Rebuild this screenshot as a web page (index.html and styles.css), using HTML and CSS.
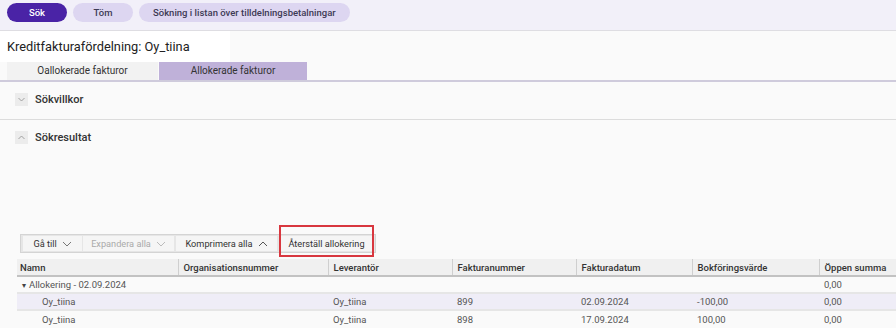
FILE: index.html
```html
<!DOCTYPE html>
<html lang="sv">
<head>
<meta charset="utf-8">
<title>Kreditfakturafördelning</title>
<link rel="stylesheet" href="styles.css">
</head>
<body>
<div class="topbar">
  <button class="pill pill-primary">Sök</button>
  <button class="pill pill-light w60">Töm</button>
  <button class="pill pill-light">Sökning i listan över tilldelningsbetalningar</button>
</div>
<div class="title">Kreditfakturafördelning: Oy_tiina</div>
<div class="tabs">
  <div class="tab">Oallokerade fakturor</div>
  <div class="tab tab-active">Allokerade fakturor</div>
</div>
<div class="section section-first">
  <span class="chev"><svg width="7" height="5" viewBox="0 0 7 5"><path d="M0.5 1 L3.5 4 L6.5 1" fill="none" stroke="#999" stroke-width="0.9"/></svg></span>
  <span class="section-title">Sökvillkor</span>
</div>
<div class="section">
  <span class="chev"><svg width="7" height="5" viewBox="0 0 7 5"><path d="M0.5 4 L3.5 1 L6.5 4" fill="none" stroke="#999" stroke-width="0.9"/></svg></span>
  <span class="section-title">Sökresultat</span>
</div>
<div class="results">
  <div class="toolbar">
    <button class="tb-btn w-goto">Gå till <svg width="10" height="6" viewBox="0 0 10 6"><path d="M1 1 L5 5 L9 1" fill="none" stroke="#777" stroke-width="1"/></svg></button>
    <button class="tb-btn tb-disabled w-exp">Expandera alla <svg width="10" height="6" viewBox="0 0 10 6"><path d="M1 1 L5 5 L9 1" fill="none" stroke="#bbb" stroke-width="1"/></svg></button>
    <button class="tb-btn w-comp">Komprimera alla <svg width="10" height="6" viewBox="0 0 10 6"><path d="M1 5 L5 1 L9 5" fill="none" stroke="#555" stroke-width="1"/></svg></button>
    <button class="tb-btn tb-marked w-reset">Återställ allokering</button>
  </div>
  <table class="grid">
    <colgroup>
      <col class="c1"><col class="c2"><col class="c3"><col class="c4"><col class="c5"><col class="c6"><col>
    </colgroup>
    <thead>
      <tr>
        <th>Namn</th><th>Organisationsnummer</th><th>Leverantör</th><th>Fakturanummer</th><th>Fakturadatum</th><th>Bokföringsvärde</th><th>Öppen summa</th>
      </tr>
    </thead>
    <tbody>
      <tr class="group">
        <td><span class="tri">&#9662;</span>Allokering - 02.09.2024</td><td></td><td></td><td></td><td></td><td></td><td>0,00</td>
      </tr>
      <tr class="sel">
        <td class="indent">Oy_tiina</td><td></td><td>Oy_tiina</td><td>899</td><td>02.09.2024</td><td>-100,00</td><td>0,00</td>
      </tr>
      <tr>
        <td class="indent">Oy_tiina</td><td></td><td>Oy_tiina</td><td>898</td><td>17.09.2024</td><td>100,00</td><td>0,00</td>
      </tr>
    </tbody>
  </table>
</div>
</body>
</html>
```
FILE: styles.css
```css
* { box-sizing: border-box; }
html, body { margin: 0; padding: 0; }
body {
  background: #fafafa;
  font-family: "Roboto", "Liberation Sans", sans-serif;
  color: #333;
  width: 896px;
  height: 328px;
  overflow: hidden;
}
button { font-family: inherit; cursor: pointer; }

.topbar {
  height: 31px;
  background: #f2f0f9;
  border-bottom: 1px solid #dedde2;
  display: flex;
  align-items: flex-start;
  gap: 6px;
  padding: 3px 7px 0;
}
.pill {
  height: 19px;
  border: none;
  border-radius: 10px;
  font-size: 9.5px;
  font-weight: 500;
  padding: 0 14px;
}
.pill-primary { background: #4a23a6; color: #fff; width: 60px; }
.pill-light { background: #ddd6f1; color: #3d3a55; }
.w60 { width: 60px; }

.title {
  background: #fff;
  width: 230px;
  height: 31px;
  font-size: 12.8px;
  padding: 8px 0 0 7px;
  color: #222;
}
.tabs {
  display: flex;
  padding-left: 7px;
  border-bottom: 2px solid #cfcbdc;
  height: 20px;
}
.tab {
  width: 151px;
  height: 18px;
  font-size: 10px;
  line-height: 18px;
  text-align: center;
  background: #f2f2f2;
  color: #333;
}
.tab-active { background: #bfb1d9; width: 148px; margin-left: 1px; }

.section {
  display: flex;
  gap: 7px;
  padding: 11px 0 0 15px;
  height: 38px;
  align-items: flex-start;
}
.section-first { border-bottom: 1px solid #dcdcdc; }
.chev {
  width: 13px;
  height: 13px;
  background: #ececec;
  display: flex;
  align-items: center;
  justify-content: center;
}
.section-title {
  font-size: 11px;
  font-weight: 500;
  color: #333;
  line-height: 13px;
}

.results {
  padding: 76px 0 0 17px;
}
.toolbar {
  display: flex;
  width: fit-content;
  margin-left: 3px;
  height: 19px;
  background: #e6e6e6;
  border: 1px solid #d4d4d4;
  padding: 1px 2px;
  gap: 1px;
}
.tb-btn {
  height: 15px;
  border: none;
  background: #f5f5f5;
  font-size: 9.2px;
  color: #333;
  padding: 0;
  display: flex;
  align-items: center;
  justify-content: center;
  gap: 5px;
}
.w-goto { width: 59px; }
.w-exp { width: 91px; }
.w-comp { width: 101px; margin-left: 1px; }
.w-reset { width: 93px; margin-left: 2px; }
.tb-disabled { color: #aaa; }
.tb-marked { position: relative; }
.tb-marked::after {
  content: "";
  position: absolute;
  left: -1px;
  right: -1px;
  top: -11px;
  bottom: -6px;
  border: 2px solid #d8373f;
}

.grid {
  margin-top: 6px;
  width: 879px;
  border-collapse: collapse;
  table-layout: fixed;
  font-size: 9.5px;
}
.c1 { width: 161px; }
.c2 { width: 150px; }
.c3 { width: 124px; }
.c4 { width: 124px; }
.c5 { width: 116px; }
.c6 { width: 127px; }
.grid th {
  background: #f0f0f0;
  height: 17px;
  font-weight: 500;
  text-align: left;
  padding: 0 5px;
  border-left: 1px solid #cfcfcf;
  border-bottom: 2px solid #c2c2c2;
  color: #333;
  white-space: nowrap;
}
.grid th:first-child { border-left: none; padding-left: 3px; }
.grid td {
  height: 17px;
  padding: 0 5px;
  color: #555;
  white-space: nowrap;
  border-bottom: 2px solid #e6e6e6;
}
.grid tr:last-child td { border-bottom: none; }
.grid td:first-child { padding-left: 5px; }
.grid td.indent { padding-left: 25px; }
.sel td { background: #efedf7; }
.tri { font-size: 8px; margin-right: 3px; color: #444; }
```
